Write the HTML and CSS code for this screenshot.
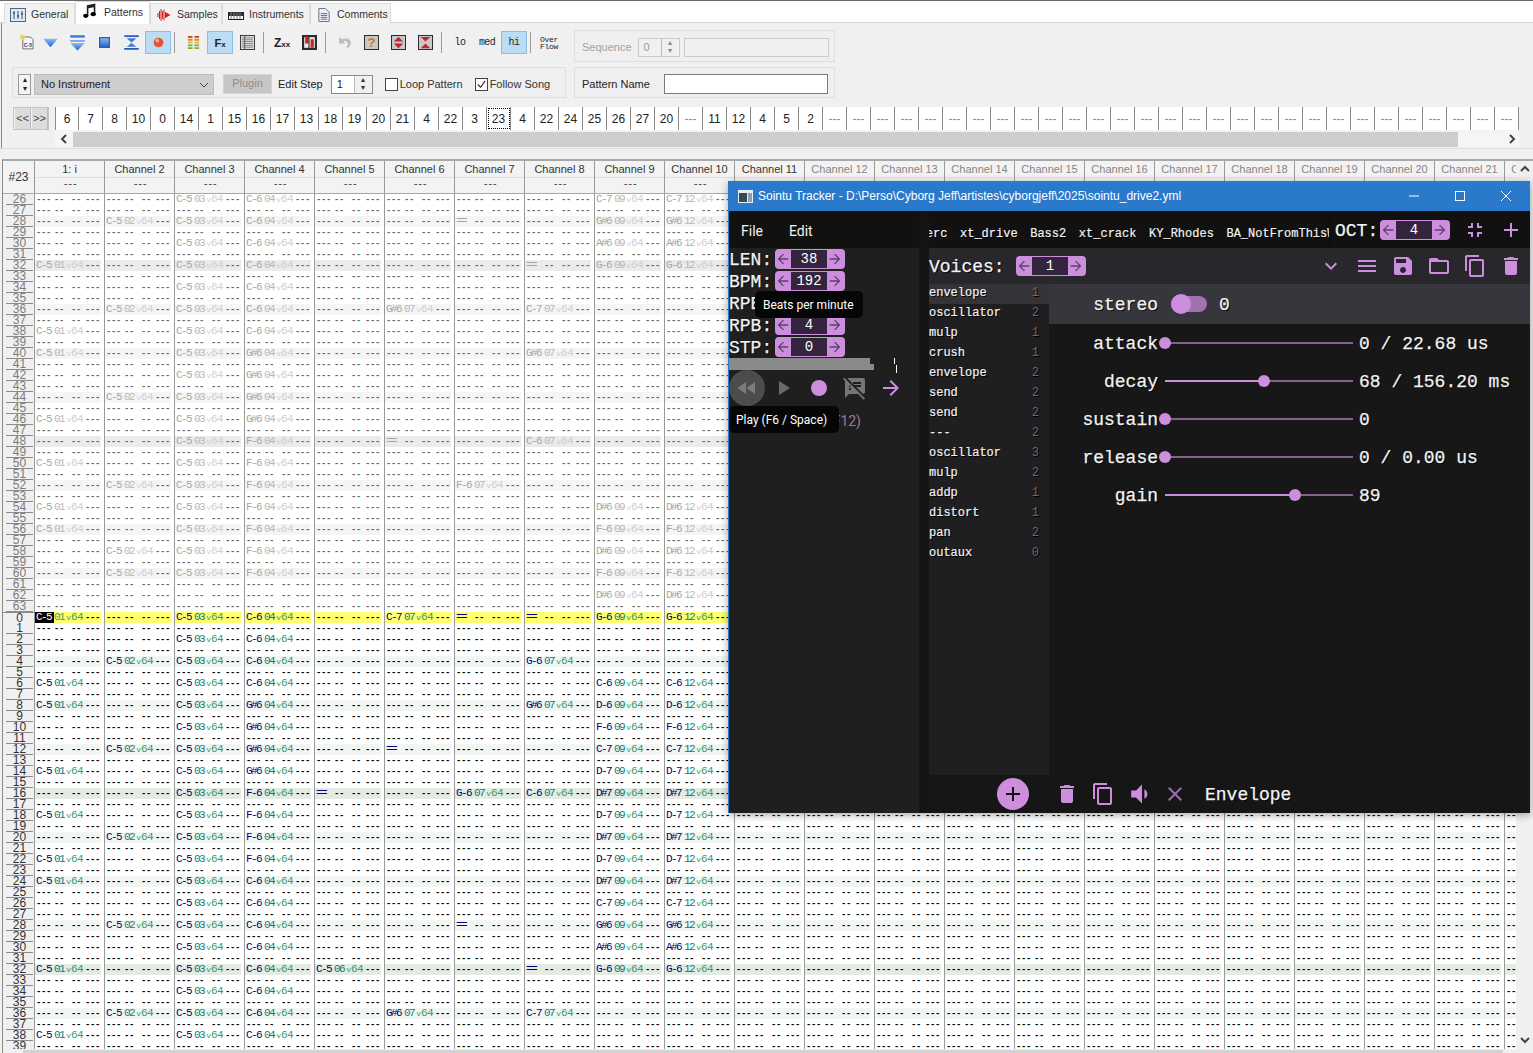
FILE: index.html
```html
<!DOCTYPE html>
<html lang="en">
<head>
<meta charset="utf-8">
<title>OpenMPT with Sointu Tracker</title>
<link rel="stylesheet" href="styles.css">
</head>
<body>
<svg class="defs" width="0" height="0" aria-hidden="true">
  <symbol id="back" viewBox="0 0 24 24"><path d="M20 11H7.83l5.59-5.59L12 4l-8 8 8 8 1.41-1.41L7.83 13H20v-2z"/></symbol>
  <symbol id="fwd" viewBox="0 0 24 24"><path d="M12 4l-1.41 1.41L16.17 11H4v2h12.17l-5.58 5.59L12 20l8-8z"/></symbol>
  <symbol id="more" viewBox="0 0 24 24"><path d="M16.59 8.59L12 13.17 7.41 8.59 6 10l6 6 6-6z"/></symbol>
  <symbol id="menu" viewBox="0 0 24 24"><path d="M3 18h18v-2H3v2zm0-5h18v-2H3v2zm0-7v2h18V6H3z"/></symbol>
  <symbol id="save" viewBox="0 0 24 24"><path d="M17 3H5c-1.11 0-2 .9-2 2v14c0 1.1.89 2 2 2h14c1.1 0 2-.9 2-2V7l-4-4zm-5 16c-1.66 0-3-1.34-3-3s1.34-3 3-3 3 1.34 3 3-1.34 3-3 3zm3-10H5V5h10v4z"/></symbol>
  <symbol id="folder" viewBox="0 0 24 24"><path d="M20 6h-8l-2-2H4c-1.1 0-1.99.9-1.99 2L2 18c0 1.1.9 2 2 2h16c1.1 0 2-.9 2-2V8c0-1.1-.9-2-2-2zm0 12H4V8h16v10z"/></symbol>
  <symbol id="copy" viewBox="0 0 24 24"><path d="M16 1H4c-1.1 0-2 .9-2 2v14h2V3h12V1zm3 4H8c-1.1 0-2 .9-2 2v14c0 1.1.9 2 2 2h11c1.1 0 2-.9 2-2V7c0-1.1-.9-2-2-2zm0 16H8V7h11v14z"/></symbol>
  <symbol id="trash" viewBox="0 0 24 24"><path d="M6 19c0 1.1.9 2 2 2h8c1.1 0 2-.9 2-2V7H6v12zM19 4h-3.5l-1-1h-5l-1 1H5v2h14V4z"/></symbol>
  <symbol id="fsexit" viewBox="0 0 24 24"><path d="M5 16h3v3h2v-5H5v2zm3-8H5v2h5V5H8v3zm6 11h2v-3h3v-2h-5v5zm2-11V5h-2v5h5V8h-3z"/></symbol>
  <symbol id="add" viewBox="0 0 24 24"><path d="M19 13h-6v6h-2v-6H5v-2h6V5h2v6h6v2z"/></symbol>
  <symbol id="close" viewBox="0 0 24 24"><path d="M19 6.41L17.59 5 12 10.59 6.41 5 5 6.41 10.59 12 5 17.59 6.41 19 12 13.41 17.59 19 19 17.59 13.41 12z"/></symbol>
  <symbol id="vol" viewBox="3 2 17 20"><path d="M18.5 12c0-1.77-1.02-3.29-2.5-4.03v8.05c1.48-.73 2.5-2.25 2.5-4.02zM5 9v6h4l5 5V4L9 9H5z"/></symbol>
  <symbol id="rew" viewBox="0 0 24 24"><path d="M11 18V6l-8.5 6 8.5 6zm.5-6l8.5 6V6l-8.5 6z"/></symbol>
  <symbol id="play" viewBox="0 0 24 24"><path d="M8 5v14l11-7z"/></symbol>
  <symbol id="rec" viewBox="0 0 24 24"><circle cx="12" cy="12" r="8"/></symbol>
  <symbol id="notesoff" viewBox="0 0 24 24"><path d="M10.54 11l-.54-.54L7.54 8 6 6.46 2.38 2.84 1.27 1.73 0 3l2.01 2.01L2 22l4-4h9l5.73 5.73L22 22.46 17.54 18l-7-7zM8 14H6v-2h2v2zm-2-3V9l2 2H6zm14-9H4.08L10 7.92V6h8v2h-7.92l1 1H18v2h-4.92l6.99 6.99C21.14 17.95 22 17.08 22 16V4c0-1.1-.9-2-2-2z"/></symbol>
  <linearGradient id="blu" x1="0" y1="0" x2="0" y2="1"><stop offset="0" stop-color="#8fbdf0"/><stop offset="1" stop-color="#1f5fc4"/></linearGradient>
</svg>

<nav class="tabs">
  <div class="tab"><svg class="tab-ic" viewBox="0 0 16 14"><rect x=".5" y=".5" width="15" height="13" fill="#dfeaf4" stroke="#4a6a86"/><path d="M4 3v8M8 3v8M12 3v8" stroke="#3a5a76"/><path d="M3 5h2M7 8h2M11 6h2" stroke="#222"/></svg>General</div>
  <div class="tab tab-on"><svg class="tab-ic tab-ic-note" viewBox="0 0 14 15"><path d="M4 2l8-1.500v10h-1.500v-6.500l-5 1v7.500h-1.500z" fill="#222"/><ellipse cx="3" cy="12" rx="2.500" ry="2"/><ellipse cx="10" cy="10.500" rx="2.500" ry="2"/></svg>Patterns</div>
  <div class="tab"><svg class="tab-ic" viewBox="0 0 14 14"><path d="M1 5v4M2.500 3v8M4 1v12M5.500 3v8M7 1.500v11M8.500 4v6M10 5.500v3" stroke="#d0201a"/><path d="M9 4.500l4.500 2.500L9 9.500z" fill="#d0201a"/></svg>Samples</div>
  <div class="tab"><svg class="tab-ic" viewBox="0 0 16 10"><rect x=".5" y="2.500" width="15" height="7" fill="#fff" stroke="#222"/><path d="M1 3h14v3H1z" fill="#333"/><path d="M3 2v7M6 2v7M9 2v7M12 2v7" stroke="#777"/></svg>Instruments</div>
  <div class="tab"><svg class="tab-ic" viewBox="0 0 12 15"><path d="M.5.500h7l4 4v10h-11z" fill="#eef3fa" stroke="#5a6a80"/><path d="M2.500 6h7M2.500 8h7M2.500 10h7M2.500 12h7" stroke="#5a6a80"/></svg>Comments</div>
</nav>

<section class="controls">
  <div class="tools-row">
    <div class="toolbar">
      <span class="tb"><svg class="ic" viewBox="0 0 18 20"><path d="M3.500 3.500h9l3 3v11h-12z" fill="#f4f6fa" stroke="#56606e"/><path d="M3 0l1 2 2-1-1 2 2 1-2 1 1 2-2-1-1 2-1-2-2 1 1-2-2-1 2-1-1-2 2 1z" fill="#f3d04a"/><text x="9.500" y="15" class="svg-c5">C-5</text></svg></span>
      <span class="tb"><svg class="ic" viewBox="0 0 14 14"><path d="M1 4h12l-6 7z" fill="url(#blu)"/></svg></span>
      <span class="tb"><svg class="ic" viewBox="0 0 14 14"><path d="M1 1h12v2H1z" fill="#3b7ad6"/><path d="M1 5h12v1.500H1z" fill="#7aa8e6"/><path d="M1 7.500h12l-6 6z" fill="url(#blu)"/></svg></span>
      <span class="tb"><svg class="ic" viewBox="0 0 14 14"><rect x="3" y="3" width="8" height="8" fill="url(#blu)" stroke="#2a5ca8"/></svg></span>
      <span class="tb"><svg class="ic" viewBox="0 0 14 14"><path d="M1 1h12v1.500H1zM1 11.500h12V13H1z" fill="#2460b8"/><path d="M3 3.500h8L7 7z" fill="#3b7ad6"/><path d="M3 10.500h8L7 7.500z" fill="#3b7ad6"/></svg></span>
      <span class="tb tb-on"><svg class="ic" viewBox="0 0 14 14"><circle cx="7" cy="7" r="4" fill="#e0553a"/><circle cx="6" cy="5.500" r="1.500" fill="#f7a890"/></svg></span>
      <i class="sep"></i>
      <span class="tb"><svg class="ic ic-l" viewBox="0 0 14 16"><path d="M1 1h5v2H1zM8 1h5v2H8z" fill="#c8402c"/><path d="M1 4h5v2H1zM8 4h5v2H8z" fill="#e0862c"/><path d="M1 7h5v2H1zM8 7h5v2H8z" fill="#e2c22c"/><path d="M1 10h5v2H1zM8 10h5v2H8zM1 13h5v2H1zM8 13h5v2H8z" fill="#7cb034"/></svg></span>
      <span class="tb tb-on tb-fx"><b>F</b><small>x</small></span>
      <span class="tb"><svg class="ic ic-l" viewBox="0 0 16 16"><rect x=".5" y=".5" width="15" height="15" fill="#dcdcdc" stroke="#333"/><path d="M2 3h12M2 5h12M2 7h12M2 9h12M2 11h12M2 13h12" stroke="#8a8a8a"/><path d="M5 1v14" stroke="#555"/></svg></span>
      <i class="sep"></i>
      <span class="tb tb-zxx"><b>Z</b><small>xx</small></span>
      <span class="tb"><svg class="ic ic-l" viewBox="0 0 14 14"><rect width="14" height="14" fill="#2a2a2a"/><path d="M2 2h10v10H2z" fill="#e8e8e8"/><path d="M3 1h3v7H3zM8 4h3v8H8z" fill="#c8202c"/><path d="M6.500 1v12" stroke="#222"/></svg></span>
      <i class="sep"></i>
      <span class="tb"><svg class="ic ic-l" viewBox="0 0 14 14"><path d="M2 2v6h6L6 6c2-1 4 0 4 2.500 0 1.500-1 3-2 4 3-.5 5-2.500 5-5C13 4 9 2 5 4z" fill="#bdbdbd"/></svg></span>
      <span class="tb"><svg class="ic ic-l" viewBox="0 0 16 16"><rect x=".5" y=".5" width="15" height="15" fill="#c8c8c8" stroke="#222"/><text x="8" y="13" class="svg-q">?</text></svg></span>
      <span class="tb"><svg class="ic ic-l" viewBox="0 0 16 16"><rect x=".5" y=".5" width="15" height="15" fill="#c8c8c8" stroke="#222"/><path d="M8 2l5 5H3zM8 14l5-5H3z" fill="#c8202c"/></svg></span>
      <span class="tb"><svg class="ic ic-l" viewBox="0 0 16 16"><rect x=".5" y=".5" width="15" height="15" fill="#c8c8c8" stroke="#222"/><path d="M3 2h10L8 7zM3 14h10L8 9z" fill="#c8202c"/></svg></span>
      <i class="sep"></i>
      <span class="tb tb-txt">lo</span>
      <span class="tb tb-txt">med</span>
      <span class="tb tb-txt tb-on">hi</span>
      <i class="sep"></i>
      <span class="tb tb-over">Over<br>Flow</span>
    </div>
    <div class="group group-seq">
      <span class="dim">Sequence</span>
      <span class="spin spin-dis"><span class="spin-val">0</span><span class="spin-btns"><i>▴</i><i>▾</i></span></span>
      <span class="seq-field"></span>
    </div>
  </div>

  <div class="inst-row">
    <div class="group group-inst">
      <span class="updown"><i>▴</i><i>▾</i></span>
      <span class="select">No Instrument<svg class="chev" viewBox="0 0 10 6"><path d="M1 1l4 4 4-4" fill="none" stroke="#444"/></svg></span>
      <span class="plugin">Plugin</span>
      <span class="editstep">Edit Step</span>
      <span class="spin"><span class="spin-val">1</span><span class="spin-btns"><i>▴</i><i>▾</i></span></span>
      <label class="check"><span class="box"></span>Loop Pattern</label>
      <label class="check"><span class="box"><svg viewBox="0 0 12 12"><path d="M2 6l3 3 5-7" fill="none" stroke="#222" stroke-width="1.200"/></svg></span>Follow Song</label>
    </div>
    <div class="group group-name">
      <span>Pattern Name</span>
      <span class="name-field"></span>
    </div>
  </div>

  <div class="order-row">
    <div class="order-nav"><span>&lt;&lt;</span><span>&gt;&gt;</span></div>
    <div class="order-wrap">
      <div class="order" id="order"></div>
      <div class="hscroll"><svg class="sc-arrow" viewBox="0 0 8 10"><path d="M6 1L2 5l4 4" fill="none" stroke="#444" stroke-width="2"/></svg><span class="hthumb"></span><svg class="sc-arrow" viewBox="0 0 8 10"><path d="M2 1l4 4-4 4" fill="none" stroke="#444" stroke-width="2"/></svg></div>
    </div>
  </div>
</section>

<section class="pattern">
  <div class="pattern-main">
    <div class="phead" id="phead"></div>
    <div class="pbody" id="pbody"></div>
    <div class="pscroll"><span></span></div>
  </div>
  <div class="vscroll">
    <svg viewBox="0 0 10 8"><path d="M1 6l4-4 4 4" fill="none" stroke="#444" stroke-width="2"/></svg>
    <svg viewBox="0 0 10 8"><path d="M1 2l4 4 4-4" fill="none" stroke="#444" stroke-width="2"/></svg>
  </div>
</section>

<div class="win">
  <header class="win-title">
    <svg class="win-ic" viewBox="0 0 15 13"><rect width="15" height="13" fill="#e8eef2"/><rect x="1" y="3" width="8" height="9" fill="#334a5c"/><rect x="10" y="3" width="4" height="9" fill="#8aa0b0"/></svg>
    <span class="win-name">Sointu Tracker - D:\Perso\Cyborg Jeff\artistes\cyborgjeff\2025\sointu_drive2.yml</span>
    <span class="win-btns">
      <svg viewBox="0 0 12 12"><path d="M1 6h10" stroke="#fff"/></svg>
      <svg viewBox="0 0 12 12"><rect x="1.500" y="1.500" width="9" height="9" fill="none" stroke="#fff"/></svg>
      <svg viewBox="0 0 12 12"><path d="M1 1l10 10M11 1L1 11" stroke="#fff"/></svg>
    </span>
  </header>
  <div class="win-body">
    <aside class="song">
      <div class="menubar"><span>File</span><span>Edit</span></div>
      <div class="song-panel">
        <div class="stat"><b>LEN:</b><div class="stepper"><svg><use href="#back"/></svg><span>38</span><svg><use href="#fwd"/></svg></div></div>
        <div class="stat"><b>BPM:</b><div class="stepper"><svg><use href="#back"/></svg><span>192</span><svg><use href="#fwd"/></svg></div></div>
        <div class="stat"><b>RPB:</b></div>
        <div class="stat"><b>RPB:</b><div class="stepper"><svg><use href="#back"/></svg><span>4</span><svg><use href="#fwd"/></svg></div></div>
        <div class="stat"><b>STP:</b><div class="stepper"><svg><use href="#back"/></svg><span>0</span><svg><use href="#fwd"/></svg></div></div>
        <div class="song-bar song-bar-a"></div>
        <div class="song-bar song-bar-b"></div>
        <div class="transport">
          <span class="t-btn t-hover"><svg><use href="#rew"/></svg></span>
          <span class="t-btn t-play"><svg><use href="#play"/></svg></span>
          <span class="t-btn t-rec"><svg><use href="#rec"/></svg></span>
          <span class="t-btn t-notes"><svg><use href="#notesoff"/></svg></span>
          <span class="t-btn t-next"><svg><use href="#fwd"/></svg></span>
        </div>
        <div class="panic">Panic (F12)</div>
        <div class="tip tip-bpm">Beats per minute</div>
        <div class="tip tip-play">Play (F6 / Space)</div>
        <svg class="cursor" viewBox="0 0 3 15"><path d="M.5 0v6M2.500 7v8" stroke="#fff"/></svg>
      </div>
    </aside>
    <div class="gutter"></div>
    <main class="instr">
      <div class="tracks">
        <div class="track-names"><span class="t-first">perc</span><span>xt_drive</span><span>Bass2</span><span>xt_crack</span><span>KY_Rhodes</span><span>BA_NotFromThisWorld</span></div>
        <div class="oct"><b>OCT:</b><div class="stepper"><svg><use href="#back"/></svg><span>4</span><svg><use href="#fwd"/></svg></div>
          <svg class="icon i-a"><use href="#fsexit"/></svg><svg class="icon i-b"><use href="#add"/></svg></div>
      </div>
      <div class="voices">
        <b>Voices:</b><div class="stepper"><svg><use href="#back"/></svg><span>1</span><svg><use href="#fwd"/></svg></div>
        <div class="voice-icons">
          <svg class="icon"><use href="#more"/></svg><svg class="icon"><use href="#menu"/></svg><svg class="icon"><use href="#save"/></svg><svg class="icon"><use href="#folder"/></svg><svg class="icon"><use href="#copy"/></svg><svg class="icon"><use href="#trash"/></svg>
        </div>
      </div>
      <div class="editor">
        <ul class="units">
          <li class="unit-on"><span>envelope</span><em>1</em></li>
          <li><span>oscillator</span><em>2</em></li>
          <li><span>mulp</span><em>1</em></li>
          <li><span>crush</span><em>1</em></li>
          <li><span>envelope</span><em>2</em></li>
          <li><span>send</span><em>2</em></li>
          <li><span>send</span><em>2</em></li>
          <li><span>---</span><em>2</em></li>
          <li><span>oscillator</span><em>3</em></li>
          <li><span>mulp</span><em>2</em></li>
          <li><span>addp</span><em>1</em></li>
          <li><span>distort</span><em>1</em></li>
          <li><span>pan</span><em>2</em></li>
          <li><span>outaux</span><em>0</em></li>
        </ul>
        <div class="params">
          <div class="param param-on"><label>stereo</label><span class="toggle"><i></i></span><output class="out-toggle">0</output></div>
          <div class="param"><label>attack</label><span class="slider"><i class="fill" style="width:0"></i><i class="knob" style="left:0"></i></span><output>0 / 22.68 us</output></div>
          <div class="param"><label>decay</label><span class="slider"><i class="fill" style="width:99px"></i><i class="knob" style="left:99px"></i></span><output>68 / 156.20 ms</output></div>
          <div class="param"><label>sustain</label><span class="slider"><i class="fill" style="width:0"></i><i class="knob" style="left:0"></i></span><output>0</output></div>
          <div class="param"><label>release</label><span class="slider"><i class="fill" style="width:0"></i><i class="knob" style="left:0"></i></span><output>0 / 0.00 us</output></div>
          <div class="param"><label>gain</label><span class="slider"><i class="fill" style="width:130px"></i><i class="knob" style="left:130px"></i></span><output>89</output></div>
        </div>
      </div>
      <div class="unitbar">
        <span class="fab"><svg><use href="#add"/></svg></span>
        <svg class="icon"><use href="#trash"/></svg><svg class="icon icon-m"><use href="#copy"/></svg><svg class="icon icon-m"><use href="#vol"/></svg><svg class="icon icon-d"><use href="#close"/></svg>
        <b>Envelope</b>
      </div>
    </main>
  </div>
</div>
<script src="script.js"></script>
</body>
</html>
```

FILE: styles.css
```css
* { box-sizing: border-box; }
html, body { margin: 0; height: 1053px; overflow: hidden; }
body { position: relative; width: 1533px; background: #f0f0f0; color: #222; font: 11px/13px "Liberation Sans", Arial, sans-serif; }
.defs { position: absolute; }
i { font-style: normal; }

/* tabs */
.tabs { display: flex; height: 23px; padding: 1px 0 0 4px; background: #fff; border-top: 1px solid #6a6a6a; border-bottom: 1px solid #d6d6d6; font-size: 10.500px; }
.tab { display: flex; align-items: center; height: 21px; margin-top: 1px; padding: 1px 4px 0 5px; background: #f2f2f2; border: 1px solid #dcdcdc; border-bottom: 0; color: #333; }
.tab:nth-child(1) { width: 71px; }
.tab:nth-child(3) { width: 72px; }
.tab:nth-child(4) { width: 88px; }
.tab:nth-child(5) { width: 81px; }
.tab-on { width: 75px; height: 23px; margin-top: -1px; padding: 0 4px 2px 6px; background: #fff; }
.tab-ic { width: 16px; height: 14px; margin-right: 5px; flex: none; }
.tab-ic-note { height: 16px; margin: 0 6px 2px 0; }

/* controls */
.controls { height: 126px; margin-left: 1px; padding-top: 7px; border-left: 1px solid #8a8a8a; border-bottom: 1px solid #dedede; }
.tools-row { display: flex; height: 32px; padding-left: 12px; }
.toolbar { display: flex; gap: 1px; height: 24px; width: 548px; margin-top: 1px; }
.tb { display: flex; align-items: center; justify-content: center; width: 26px; height: 23px; flex: none; color: #222; }
.tb:nth-child(2) { margin-left: -4px; }
.tb-on { background: #bcdcf4; border: 1px solid #8cbfe6; }
.tb-fx b, .tb-zxx b { font: bold 11px "Liberation Sans", sans-serif; }
.tb-fx small, .tb-zxx small { font: bold 8px "Liberation Sans", sans-serif; margin-top: 3px; }
.tb-zxx b { font-size: 12px; }
.tb-txt { font: 10px "Liberation Mono", monospace; letter-spacing: -.6px; }
.tb-over { font: 8px/7px "Liberation Mono", monospace; letter-spacing: -.3px; }
.ic { width: 17px; height: 17px; }
.ic-l { width: 15px; height: 15px; }
.svg-c5 { font: bold 6px "Liberation Sans", sans-serif; text-anchor: middle; fill: #333; }
.svg-q { font: bold 14px "Liberation Sans", sans-serif; text-anchor: middle; fill: #c87818; }
.sep { width: 1px; height: 21px; margin: 1px 4px 0 2px; background: #9a9a9a; flex: none; }
.group { display: flex; align-items: center; border: 1px solid #dfdfdf; background: #efefef; }
.group-seq { width: 261px; height: 32px; margin-left: 12px; padding: 2px 0 0 7px; }
.dim { color: #a2a2a2; }
.spin { display: flex; width: 42px; height: 19px; border: 1px solid #8a8a8a; background: #fff; }
.spin-val { flex: 1; padding: 2px 0 0 5px; }
.spin-btns { display: flex; flex-direction: column; width: 18px; border-left: 1px solid #bbb; background: #f0f0f0; font-size: 8px; line-height: 8px; text-align: center; color: #333; }
.spin-dis { margin-left: 6px; width: 42px; background: #f0f0f0; border-color: #ccc; color: #999; }
.spin-dis .spin-btns { color: #888; }
.seq-field { width: 145px; height: 19px; margin-left: 4px; border: 1px solid #ccc; background: #f0f0f0; }
.inst-row { display: flex; height: 31px; margin-top: 5px; padding-left: 10px; }
.group-inst { width: 554px; padding: 4px 0 0 5px; }
.updown { display: flex; flex-direction: column; width: 13px; height: 21px; border: 1px solid #9a9a9a; background: #f4f4f4; font-size: 8px; line-height: 9px; text-align: center; }
.select { display: flex; align-items: center; justify-content: space-between; width: 180px; height: 21px; margin-left: 3px; padding: 0 4px 0 6px; background: #cdcdcd; border: 1px solid #bdbdbd; color: #222; }
.chev { width: 10px; height: 6px; }
.plugin { display: flex; align-items: center; justify-content: center; width: 49px; height: 20px; margin: 0 0 2px 9px; background: #c6c6c6; border: 1px solid #fafafa; outline: 1px solid #d4d4d4; outline-offset: -1px; color: #8e8e8e; }
.editstep { margin-left: 6px; }
.group-inst .spin { margin-left: 8px; width: 42px; }
.check { display: flex; align-items: center; margin-left: 12px; color: #333; }
.box { width: 13px; height: 13px; margin-right: 2px; border: 1px solid #444; background: #fff; }
.box svg { display: block; }
.group-name { width: 261px; margin-left: 8px; padding: 3px 0 0 7px; }
.name-field { width: 164px; height: 20px; margin-left: 14px; border: 1px solid #7a7a7a; background: #fff; }
.order-row { display: flex; margin-top: 9px; padding-left: 11px; }
.order-nav { display: flex; width: 36px; height: 23px; border: 1px solid #c4c4c4; background: #dcdcdc; font: 11px "Liberation Mono", monospace; color: #444; }
.order-nav span { flex: 1; display: flex; align-items: center; justify-content: center; letter-spacing: 0; border-right: 1px solid #bcbcbc; border-left: 1px solid #f4f4f4; }
.order-wrap { width: 1464px; margin-left: 6px; }
.order { display: flex; height: 23px; background: #fff; border-left: 1px solid #8a8a8a; }
.oc { display: flex; align-items: center; justify-content: center; width: 24px; flex: none; padding-top: 1px; border-right: 1px solid #8a8a8a; font-size: 12px; color: #222; }
.oc:first-child { width: 23px; }
.oc-none { color: #888; }
.oc-sel { outline: 1px dotted #000; outline-offset: -2px; }
.hscroll { display: flex; align-items: center; height: 16px; margin-top: 1px; background: #f5f5f5; }
.sc-arrow { width: 8px; height: 10px; margin: 0 5px; flex: none; }
.sc-arrow:last-child { margin: 0 3px 0 auto; }
.hthumb { width: 1385px; height: 15px; background: #cdcdcd; flex: none; }

/* pattern */
.pattern { display: flex; height: 894px; margin: 10px 0 0 2px; border-top: 2px solid #a8a8a8; border-left: 1px solid #8a8a8a; }
.pattern-main { width: 1513px; overflow: hidden; }
.phead { display: flex; height: 33px; background: #f3f3f3; border-bottom: 1px solid #a8a8a8; }
.hc { width: 70px; flex: none; border-right: 1px solid #9a9a9a; text-align: center; }
.hc-num { display: flex; align-items: center; justify-content: center; width: 32px; font-size: 12px; color: #333; }
.hc-name { height: 17px; padding-top: 2px; border-bottom: 1px solid #e0e0e0; font-size: 11px; color: #333; white-space: nowrap; overflow: hidden; }
.hc-sub { font: 10px/14px "Liberation Mono", monospace; letter-spacing: -1.500px; color: #444; }
.hc-mute .hc-name { color: #868686; }
.pbody { height: 855px; overflow: hidden; background: #fff; }
.r { display: flex; width: 1570px; height: 11px; }
.rn { width: 32px; height: 11px; flex: none; padding: 0 1px 0 3px; background: #f0f0f0; border-right: 1px solid #9a9a9a; font-size: 12px; line-height: 10px; text-align: center; color: #333; }
.rn span { display: block; height: 11px; border-bottom: 1px solid #8a8a8a; }
.r-old .rn { color: #7c7c7c; }
.c { width: 70px; height: 11px; flex: none; border-right: 1px solid #9a9a9a; }
.ci { display: flex; width: 66px; height: 11px; padding-left: 1px; font: 11px/11px "Liberation Mono", monospace; letter-spacing: -1.600px; color: #000; white-space: pre; }
.n { width: 18px; color: #000080; }
.i { width: 10px; color: #008080; }
.v { width: 19px; text-align: right; color: #3e9a5e; letter-spacing: -.600px; }
.v small { font-size: 8px; letter-spacing: 0; }
.e { margin-left: 2px; }
.ci .d { padding-top: 1px; font-size: 9px; font-weight: bold; color: #000; letter-spacing: -.400px; }
.ci .v.d { padding-right: 2px; }
.r-old .ci, .r-old .ci .d { color: #666; }
.r-old .n { color: #a6a6a6; }
.r-old .i { color: #b8b8b8; }
.r-old .v { color: #cfcfcf; }
.h4 .ci { background: #f2f6f2; }
.h16 .ci { background: #e3ebe3; }
.r-old.h4 .ci { background: #f5f5f5; }
.r-old.h16 .ci { background: #ebebeb; }
.h0 .ci { background: #ffff70; }
.h0 .rn { border-top: 1px solid #888; }
.cur { margin-left: -1px; padding-left: 1px; width: 19px; background: #000; color: #fff; }
.ci .cur + .i { color: #3aa36a; }
.pscroll { height: 5px; margin-top: 1px; background: #f0f0f0; }
.pscroll span { display: block; height: 5px; margin-left: 20px; width: 1480px; background: #d2d2d2; }
.vscroll { display: flex; flex-direction: column; justify-content: space-between; align-items: center; width: 17px; padding: 0 0 9px; }
.vscroll svg { width: 10px; height: 8px; margin-top: 4px; }

/* sointu window */
.win { position: absolute; left: 728px; top: 181px; width: 802px; height: 632px; display: flex; flex-direction: column; background: #1c1c1e; box-shadow: 0 2px 8px rgba(0,0,0,.35); border-left: 1px solid #2b79ca; }
.win-title { display: flex; align-items: center; height: 30px; padding-left: 9px; background: #2b79ca; color: #fff; font-size: 12px; }
.win-ic { width: 15px; height: 13px; margin-right: 5px; }
.win-name { flex: 1; white-space: nowrap; }
.win-btns { display: flex; gap: 34px; padding-right: 18px; }
.win-btns svg { width: 12px; height: 12px; }
.win-body { display: flex; flex: 1; min-height: 0; font-family: "Liberation Mono", monospace; color: #f2f2f2; }
.song { width: 190px; display: flex; flex-direction: column; }
.menubar { display: flex; gap: 26px; height: 37px; padding: 11px 0 0 12px; background: #111; font: 14px/18px Roboto, sans-serif; }
.song-panel { position: relative; flex: 1; background: #1f1f20; }
.stat { display: flex; align-items: center; height: 22px; }
.stat b, .oct b, .voices b, .unitbar b { font: 18px/22px "Liberation Mono", monospace; text-shadow: 1px 1px 0 #000; -webkit-text-stroke: .25px #f2f2f2; padding-top: 2px; }
.stat b { width: 46px; }
.stepper { display: flex; align-items: center; width: 70px; height: 20px; padding-left: 1px; background: #cd8ede; border-radius: 4px; flex: none; }
.stepper svg { width: 16px; height: 16px; margin-left: -1px; fill: #5f4069; }
.stepper span { width: 36px; height: 18px; margin: 0 1px 0 0; background: #33253e; color: #fff; font: 14px/19px "Liberation Mono", monospace; text-align: center; }
.song-bar { height: 6px; background: #8a8a8a; }
.song-bar-a { width: 141px; }
.song-bar-b { width: 145px; }
.transport { display: flex; align-items: center; height: 36px; }
.t-btn { display: flex; align-items: center; justify-content: center; width: 36px; height: 36px; flex: none; }
.t-btn svg { width: 24px; height: 24px; fill: #cd8ede; }
.t-hover { background: #4c4c4e; border-radius: 50%; }
.t-hover svg { fill: #7c7c7e; }
.t-play svg { fill: #6a6a6c; }
.t-notes svg { fill: #767678; }
.panic { width: 132px; margin-top: 6px; font: 14px/18px Roboto, sans-serif; color: #9a78a6; text-align: right; }
.tip { position: absolute; height: 27px; padding: 0 8px; background: #060606; border-radius: 5px; color: #fff; font: 12px/29px Roboto, sans-serif; white-space: nowrap; }
.tip-bpm { left: 26px; top: 43px; width: 108px; }
.tip-play { left: 0; top: 158px; width: 110px; padding: 0 7px; }
.cursor { position: absolute; left: 165px; top: 110px; width: 3px; height: 15px; }
.gutter { width: 10px; flex: none; background: #141414; }
.instr { flex: 1; min-width: 0; display: flex; flex-direction: column; position: relative; background: #1c1c1e; }
.tracks { display: flex; height: 37px; background: #111; }
.track-names { display: flex; gap: 12.600px; width: 400px; overflow: hidden; padding-top: 15px; font: 12px/16px "Liberation Mono", monospace; text-shadow: 1px 1px 0 #000; -webkit-text-stroke: .2px #f2f2f2; white-space: nowrap; flex: none; }
.t-first { margin-left: -10.400px; }
.oct { display: flex; align-items: center; flex: 1; padding-left: 5px; border-left: 1px solid #0a0a0a; }
.oct b { width: 45px; }
.icon { width: 24px; height: 24px; fill: #cd8ede; flex: none; }
.i-a { margin-left: 13px; }
.i-b { margin-left: 12px; }
.voices { display: flex; align-items: center; height: 36px; background: #28272b; }
.voices b { width: 87px; }
.voice-icons { display: flex; gap: 12px; margin-left: auto; padding-right: 7px; }
.editor { display: flex; flex: 1; min-height: 0; }
.units { width: 120px; margin: 0; padding: 0; list-style: none; background: #1f1f21; }
.units li { display: flex; justify-content: space-between; height: 20px; padding: 0 10px 0 0; font: 12px/18px "Liberation Mono", monospace; text-shadow: 1px 1px 0 #000; -webkit-text-stroke: .2px #f2f2f2; }
.units em { font-style: normal; color: #6c6c6c; -webkit-text-stroke: 0; }
.unit-on { background: #343438; }
.params { flex: 1; background: #171717; }
.param { display: flex; align-items: center; height: 38px; font: 18px/22px "Liberation Mono", monospace; text-shadow: 1px 1px 0 #000; -webkit-text-stroke: .25px #f2f2f2; }
.param label, .param output { padding-top: 2px; }
.param-on { height: 40px; background: #37363c; }
.param label { width: 109px; text-align: right; }
.slider { position: relative; width: 188px; height: 2px; margin: 0 6px 0 7px; background: #84608e; flex: none; }
.fill { position: absolute; left: 0; top: 0; height: 2px; background: #cd8ede; }
.knob { position: absolute; top: -5px; width: 12px; height: 12px; margin-left: -6px; border-radius: 50%; background: #cd8ede; }
.toggle { position: relative; width: 36px; height: 16px; margin: 0 12px 0 13px; border-radius: 8px; background: #a172ad; flex: none; }
.toggle i { position: absolute; left: 0; top: -2px; width: 20px; height: 20px; border-radius: 50%; background: #cd8ede; }
.unitbar { display: flex; align-items: center; height: 38px; flex: none; background: #161616; padding-left: 68px; }
.unitbar .icon { margin-right: 12px; }
.unitbar b { margin-left: 6px; }
.icon-d { fill: #9a6ea8; }
.fab { display: flex; align-items: center; justify-content: center; width: 32px; height: 32px; margin-right: 26px; border-radius: 50%; background: #cd8ede; flex: none; }
.fab svg { width: 24px; height: 24px; margin: 0; fill: #111; }
```

FILE: script.js
```js
// Pattern and order data for the tracker view.
var ORDER = [6,7,8,10,0,14,1,15,16,17,13,18,19,20,21,4,22,3,23,4,22,24,25,26,27,20,null,11,12,4,5,2];
var order = document.getElementById('order');
var html = '';
for (var k = 0; k < 61; k++) {
  var v = ORDER[k];
  var none = v === null || v === undefined;
  html += '<span class="oc' + (none ? ' oc-none' : '') + (k === 18 ? ' oc-sel' : '') + '">' + (none ? '---' : v) + '</span>';
}
order.innerHTML = html;

// Header
var head = '<div class="hc hc-num">#23</div>';
for (var c = 1; c <= 22; c++) {
  head += '<div class="hc' + (c > 11 ? ' hc-mute' : '') + '"><div class="hc-name">' + (c === 1 ? '1: i' : 'Channel ' + c) + '</div><div class="hc-sub">---</div></div>';
}
document.getElementById('phead').innerHTML = head;

function same(list, note) { var o = {}; list.forEach(function (r) { o[r] = note; }); return o; }
function merge() { var o = {}; for (var i = 0; i < arguments.length; i++) { for (var k in arguments[i]) o[k] = arguments[i][k]; } return o; }
function evens(a, b) { var l = []; for (var i = a; i <= b; i += 2) l.push(i); return l; }

var leadT = {26:'C-7',28:'G#6',30:'A#6',32:'G-6',54:'D#6',56:'F-6',58:'D#6',60:'F-6',62:'D#6'};
var leadB = {0:'G-6',6:'C-6',8:'D-6',10:'F-6',12:'C-7',14:'D-7',16:'D#7',18:'D-7',20:'D#7',22:'D-7',24:'D#7',26:'C-7',28:'G#6',30:'A#6',32:'G-6'};

// [instrument, previous-pattern notes, current-pattern notes]
var CH = [
  ['01', same([32,38,40,46,50,54,56],'C-5'), same([0,6,8,14,18,22,24,32,38],'C-5')],
  ['02', same([28,36,44,52,58,60],'C-5'), same([4,12,20,28,36],'C-5')],
  ['03', same(evens(26,60),'C-5'), same(evens(0,38),'C-5')],
  ['04', merge(same(evens(26,38),'C-6'), same(evens(40,46),'G#6'), same(evens(48,60),'F-6')),
         merge(same(evens(0,6),'C-6'), same(evens(8,14),'G#6'), same(evens(16,22),'F-6'), same(evens(24,38),'C-6'))],
  ['06', {}, {16:'==',32:'C-5'}],
  ['07', {36:'G#6',48:'=='}, {0:'C-7',12:'==',36:'G#6'}],
  ['07', {28:'==',52:'F-6'}, {0:'==',16:'G-6',28:'=='}],
  ['07', {32:'==',36:'C-7',40:'G#6',48:'C-6'}, {0:'==',4:'G-6',8:'G#6',16:'C-6',32:'==',36:'C-7'}],
  ['09', leadT, leadB],
  ['12', leadT, leadB]
];

function cell(chIdx, note, isCursor) {
  var inst = CH[chIdx] ? CH[chIdx][0] : '';
  if (note && note !== '==') {
    return '<div class="c"><div class="ci"><span class="n' + (isCursor ? ' cur' : '') + '">' + note + '</span><span class="i">' + inst +
      '</span><span class="v"><small>v</small>64</span><span class="e d">---</span></div></div>';
  }
  return '<div class="c"><div class="ci"><span class="n' + (note ? '' : ' d') + '">' + (note || '---') + '</span><span class="i d">--</span><span class="v d">--</span><span class="e d">---</span></div></div>';
}

function row(num, old) {
  var cls = 'r' + (old ? ' r-old' : '');
  if (!old && num === 0) cls += ' h0';
  else if (num % 16 === 0) cls += ' h16';
  else if (num % 4 === 0) cls += ' h4';
  var out = '<div class="' + cls + '"><div class="rn"><span>' + num + '</span></div>';
  for (var c = 0; c < 22; c++) {
    var notes = CH[c] ? CH[c][old ? 1 : 2] : {};
    out += cell(c, notes[num], !old && num === 0 && c === 0);
  }
  return out + '</div>';
}

var body = '';
for (var r = 26; r < 64; r++) body += row(r, true);
for (var q = 0; q < 40; q++) body += row(q, false);
document.getElementById('pbody').innerHTML = body;
```
